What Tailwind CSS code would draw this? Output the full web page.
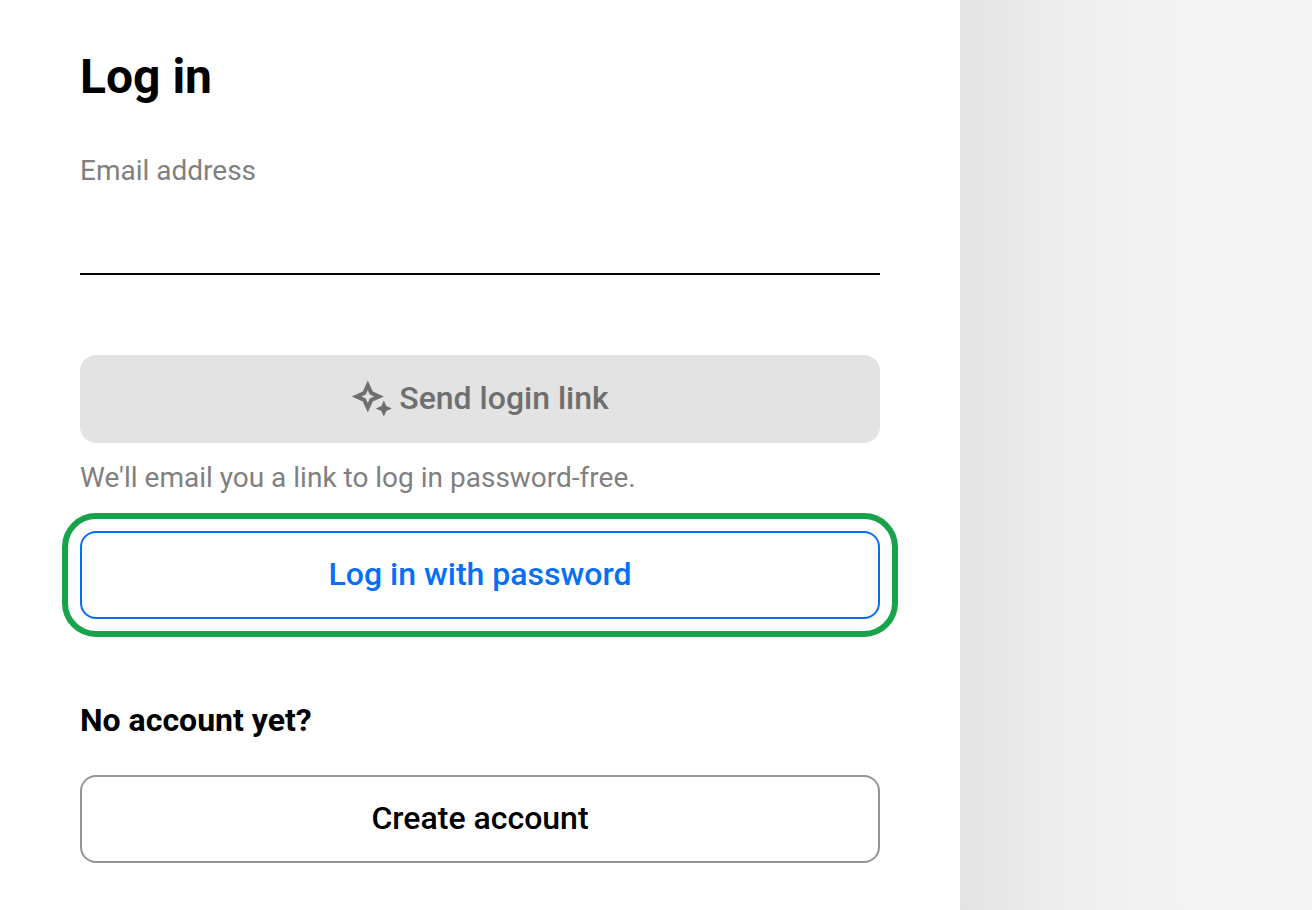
<!DOCTYPE html>
<html lang="en">
<head>
<meta charset="utf-8">
<meta name="viewport" content="width=device-width, initial-scale=1">
<title>Log in</title>
<script src="https://cdn.jsdelivr.net/npm/@tailwindcss/browser@4"></script>
</head>
<body class="flex min-h-screen bg-white font-['Roboto',sans-serif] text-black">
<main class="w-full max-w-[960px] px-20 pt-[45px] pb-12">
  <h1 class="text-5xl leading-16 font-bold">Log in</h1>
  <form>
    <label for="email" class="mt-11 block text-[28px] leading-9 text-[#808080]">Email address</label>
    <input id="email" type="email" class="block h-[86px] w-full border-b-2 border-black text-[32px] outline-none">
    <button type="submit" disabled class="mt-20 flex h-[88px] w-full items-center justify-center gap-2 rounded-2xl bg-[#e3e3e3] pb-0.5 text-[32px] font-medium text-[#6f6f6f]">
      <svg class="h-10 w-10 overflow-visible" viewBox="0 0 40 40" fill="currentColor" aria-hidden="true">
        <path fill-rule="evenodd" d="M16.8 2.6L21.8 13.6L32.8 18.6L21.8 23.6L16.8 34.6L11.8 23.6L.8 18.6L11.8 13.6ZM16.8 12.3L14.8 16.6L10.5 18.6L14.8 20.6L16.8 24.9L18.8 20.6L23.1 18.6L18.8 16.6Z"/>
        <path d="M32.8 22.6L35.3 28.1L40.8 30.6L35.3 33.1L32.8 38.6L30.3 33.1L24.8 30.6L30.3 28.1Z"/>
      </svg>
      Send login link
    </button>
    <p class="mt-4 text-[28px] leading-[38px] text-[#808080]">We'll email you a link to log in password-free.</p>
    <div class="-mx-[18px] mt-4 rounded-[34px] border-6 border-[#17a34a] p-3">
      <button type="button" class="block h-[88px] w-full rounded-2xl border-2 border-[#0570f7] pb-0.5 text-[32px] font-medium text-[#0570f7]">Log in with password</button>
    </div>
  </form>
  <h2 class="mt-16 text-[32px] leading-[38px] font-bold">No account yet?</h2>
  <button type="button" class="mt-9 block h-[88px] w-full rounded-2xl border-2 border-[#949494] pb-0.5 text-[32px] font-medium">Create account</button>
</main>
<aside class="flex-1 bg-[linear-gradient(to_right,#e4e4e4_0%,#e8e8e8_13%,#ededed_27%,#f0f0f0_40%,#f3f3f3_55%,#f5f5f5_100%)]"></aside>
</body>
</html>
